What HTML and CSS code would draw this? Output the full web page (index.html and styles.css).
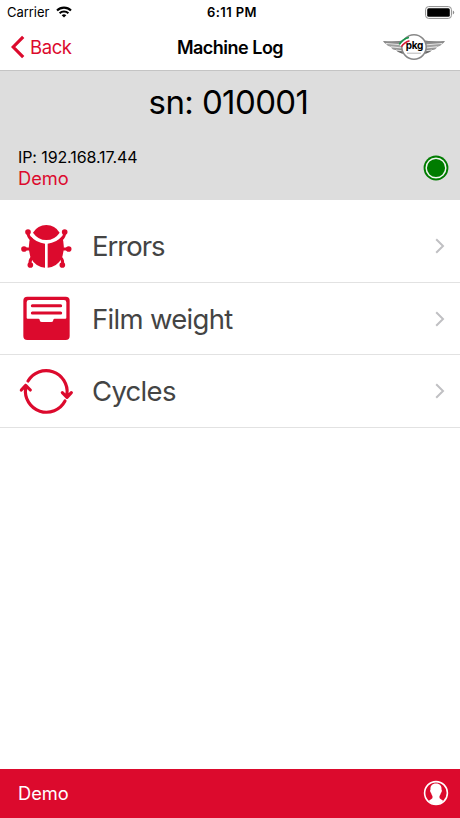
FILE: index.html
```html
<!DOCTYPE html>
<html lang="en">
<head>
    <meta charset="UTF-8">
    <meta name="viewport" content="width=device-width, initial-scale=1.0">
    <title>Machine Log</title>
    <link rel="stylesheet" href="styles.css">
</head>
<body>
    <div class="status-bar">
        <div class="carrier">
            <span>Carrier</span>
            <svg width="16" height="12" viewBox="0 0 16 12">
                <g fill="none" stroke="#000" stroke-width="2.1">
                    <path d="M1 4.5a10 10 0 0 1 14 0"/>
                    <path d="M3.6 7.3a6.3 6.3 0 0 1 8.8 0"/>
                </g>
                <path d="M8 11.6L5.7 9.3a3.3 3.3 0 0 1 4.6 0z"/>
            </svg>
        </div>
        <div class="time">6:11 PM</div>
        <svg class="battery" width="30" height="13" viewBox="0 0 30 13">
            <rect x=".6" y=".6" width="25.8" height="11.8" rx="3" fill="#fff" stroke="#8c8c8c"/>
            <rect x="2.2" y="2.2" width="22.6" height="8.6" rx="1.5"/>
            <path d="M27.8 4.6q1.4.5 1.4 1.9t-1.4 1.9z" fill="#8c8c8c"/>
        </svg>
    </div>

    <header>
        <a class="back" href="#">
            <svg width="14" height="24" viewBox="0 0 14 24">
                <path d="M12.2 1.8L2.2 12l10 10.2" fill="none" stroke="#dc0a2d" stroke-width="3.2"/>
            </svg>
            <span>Back</span>
        </a>
        <h1>Machine Log</h1>
        <svg class="logo" width="64" height="28" viewBox="0 0 64 28">
            <defs>
                <linearGradient id="wing" x1="0" y1="0" x2="0" y2="1">
                    <stop offset="0" stop-color="#777"/>
                    <stop offset=".5" stop-color="#aaa"/>
                    <stop offset="1" stop-color="#555"/>
                </linearGradient>
            </defs>
            <path d="M1 8Q15 9 24 7L23 21Q16 20 14 17Q10 17 9 14Q5 13 4 11Q2 10 1 8zM63 8Q49 9 40 7L41 21Q48 20 50 17Q54 17 55 14Q59 13 60 11Q62 10 63 8z" fill="url(#wing)"/>
            <path d="M4 10.5L22 12M9 13.8L20 15M14 17L21 17.8M60 10.5L42 12M55 13.8L44 15M50 17L43 17.8" fill="none" stroke="#eee" stroke-width=".9"/>
            <circle cx="32" cy="14" r="12.2" fill="#fff" stroke="#888" stroke-width="1.5"/>
            <path d="M17.5 11.5Q20 6 27 4.5" fill="none" stroke="#169448" stroke-width="1.7"/>
            <path d="M18.5 12.8Q21 8 27.5 6.2" fill="none" stroke="#fff" stroke-width="1.5"/>
            <path d="M19.5 13.7Q22 9.5 27.5 7.8" fill="none" stroke="#d81735" stroke-width="1.6"/>
            <text x="32.4" y="16" class="logo-text">pkg</text>
            <path d="M25 20.2h14" stroke="#999" stroke-width=".7"/>
        </svg>
    </header>

    <section class="machine">
        <h2>sn: 010001</h2>
        <div class="machine-info">
            <div>
                <p class="ip">IP: 192.168.17.44</p>
                <p class="name">Demo</p>
            </div>
            <svg width="26" height="26" viewBox="0 0 26 26">
                <circle cx="13" cy="13" r="12.4" fill="#007c00"/>
                <circle cx="13" cy="13" r="9.8" fill="none" stroke="#eef5ee" stroke-width="1.5"/>
            </svg>
        </div>
    </section>

    <main class="menu">
        <a class="row" href="#">
            <svg class="icon" viewBox="24 18 168 168">
                <g fill="none" stroke="#dc0a2d" stroke-width="9" stroke-linecap="round">
                    <path d="M54 60Q54 75 65 83M164 60Q164 75 153 83M42 111H60M158 111H176M70 134Q57 142 61 158M148 134Q161 142 157 158"/>
                </g>
                <g fill="#dc0a2d">
                    <circle cx="54" cy="60" r="8.5"/>
                    <circle cx="164" cy="60" r="8.5"/>
                    <circle cx="42" cy="111" r="8.5"/>
                    <circle cx="176" cy="111" r="8.5"/>
                    <circle cx="61" cy="159" r="8.5"/>
                    <circle cx="157" cy="159" r="8.5"/>
                    <path d="M69 62Q83 39 109 39T149 62Q134 84 109 84T69 62z"/>
                    <path d="M62 73Q79 93 105 95V167Q76 164 62 137Q51 104 62 73zM156 73Q139 93 113 95V167Q142 164 156 137Q167 104 156 73z"/>
                </g>
            </svg>
            <span class="label label-errors">Errors</span>
            <svg class="chevron" viewBox="0 0 10 16"><path d="M1.2 1.2L8 8l-6.8 6.8"/></svg>
        </a>
        <a class="row" href="#">
            <svg class="icon" viewBox="24 18 168 168">
                <rect x="40" y="35" width="139" height="130" rx="12" fill="#dc0a2d"/>
                <path d="M57 45H162Q169 45 169 52V98Q169 101 166 101H134Q130 101 130 105Q130 111 124 111H95Q89 111 89 105Q89 101 85 101H53Q50 101 50 98V52Q50 45 57 45z" fill="#fff"/>
                <path d="M67 62H152M67 84H152" stroke="#dc0a2d" stroke-width="9" stroke-linecap="round"/>
            </svg>
            <span class="label">Film weight</span>
            <svg class="chevron" viewBox="0 0 10 16"><path d="M1.2 1.2L8 8l-6.8 6.8"/></svg>
        </a>
        <a class="row" href="#">
            <svg class="icon" viewBox="24 17 168 168">
                <g fill="none" stroke="#dc0a2d" stroke-width="9.5" stroke-linecap="round" stroke-linejoin="round">
                    <path d="M54 71A63 63 0 0 1 171 110V120M157 106L171 120L184 106"/>
                    <path d="M165 131A63 63 0 0 1 47 92V84M34 98L47 84L61 98"/>
                </g>
            </svg>
            <span class="label">Cycles</span>
            <svg class="chevron" viewBox="0 0 10 16"><path d="M1.2 1.2L8 8l-6.8 6.8"/></svg>
        </a>
    </main>

    <footer>
        <span>Demo</span>
        <svg width="26" height="26" viewBox="0 0 26 26">
            <circle cx="13" cy="13" r="11.4" fill="none" stroke="#fff" stroke-width="1.6"/>
            <path d="M13 3.6C17 3.6 18.8 6 18.5 9.6C19.3 10.2 18.8 12.5 17.9 12.9C17.5 14.7 16.4 15.5 16.4 17C16.4 18.8 18.2 19.4 20 20.6Q18 24.3 13 24.3T6 20.6C7.8 19.4 9.6 18.8 9.6 17C9.6 15.5 8.5 14.7 8.1 12.9C7.2 12.5 6.7 10.2 7.5 9.6C7.2 6 9 3.6 13 3.6z" fill="#fff"/>
        </svg>
    </footer>
</body>
</html>
```
FILE: styles.css
```css
* {
    margin: 0;
    padding: 0;
    box-sizing: border-box;
}

body {
    display: flex;
    flex-direction: column;
    height: 100vh;
    font-family: Inter, 'Liberation Sans', sans-serif;
    background: #fff;
    color: #000;
    overflow: hidden;
}

a {
    color: inherit;
    text-decoration: none;
}

svg {
    display: block;
    flex: none;
}

/* Status bar */
.status-bar {
    display: grid;
    grid-template-columns: 1fr auto 1fr;
    align-items: center;
    height: 24px;
    padding: 0 5px 0 7px;
    font-size: 13px;
}

.carrier {
    display: flex;
    align-items: center;
    gap: 7px;
    letter-spacing: -0.05px;
}

.time {
    margin-left: 2px;
    font-weight: 600;
    letter-spacing: 0.4px;
}

.battery {
    justify-self: end;
}

/* Navigation */
header {
    display: grid;
    grid-template-columns: 1fr auto 1fr;
    align-items: center;
    height: 47px;
    padding: 0 14px 0 11px;
    border-bottom: 1px solid #c4c4c4;
}

.back {
    display: flex;
    align-items: center;
    gap: 5px;
    font-size: 18.5px;
    letter-spacing: -0.4px;
    color: #dc0a2d;
}

h1 {
    margin-left: 3px;
    font-size: 18px;
    font-weight: 600;
    letter-spacing: -0.5px;
}

.logo {
    justify-self: end;
}

.logo-text {
    font-size: 10px;
    font-weight: 700;
    letter-spacing: -0.3px;
    text-anchor: middle;
}

/* Machine details */
.machine {
    height: 129px;
    padding-top: 10px;
    background: #ddd;
}

h2 {
    padding-right: 3px;
    font-size: 33px;
    font-weight: 400;
    line-height: 42px;
    letter-spacing: -0.6px;
    text-align: center;
}

.machine-info {
    display: flex;
    justify-content: space-between;
    align-items: center;
    margin-top: 24px;
    padding: 0 11px 0 18px;
}

.ip {
    font-size: 16px;
    line-height: 20px;
    letter-spacing: -0.1px;
}

.name {
    font-size: 18.3px;
    line-height: 22px;
    color: #dc0a2d;
}

/* Menu */
.menu {
    flex: 1;
    padding-top: 10px;
}

.row {
    display: flex;
    align-items: center;
    height: 72.5px;
    padding: 1px 15px 0 18px;
    border-bottom: 1px solid #e2e2e2;
}

.icon {
    width: 56px;
    height: 56px;
}

.label {
    flex: 1;
    margin-left: 18px;
    font-size: 27.5px;
    letter-spacing: -0.7px;
    color: #444;
}

.label-errors {
    letter-spacing: -1px;
}

.chevron {
    width: 10px;
    height: 16px;
    fill: none;
    stroke: #c0c0c3;
    stroke-width: 2;
}

/* Footer */
footer {
    display: flex;
    justify-content: space-between;
    align-items: center;
    height: 49px;
    padding: 0 11px 1px 18px;
    font-size: 18.3px;
    color: #fff;
    background: #dc0a2d;
}
```
